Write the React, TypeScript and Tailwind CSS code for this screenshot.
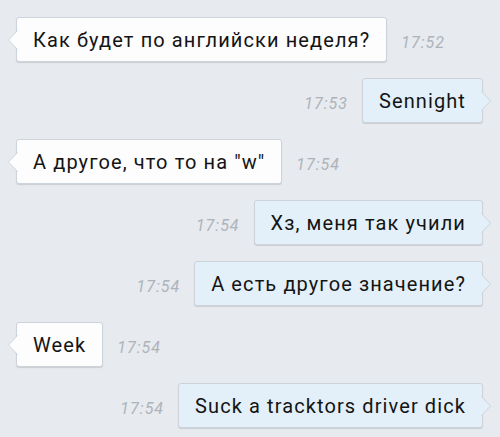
const MESSAGES = [
  { id: 1, text: "Как будет по английски неделя?", time: "17:52", out: false },
  { id: 2, text: "Sennight", time: "17:53", out: true },
  { id: 3, text: "А другое, что то на \"w\"", time: "17:54", out: false },
  { id: 4, text: "Хз, меня так учили", time: "17:54", out: true },
  { id: 5, text: "А есть другое значение?", time: "17:54", out: true },
  { id: 6, text: "Week", time: "17:54", out: false },
  { id: 7, text: "Suck a tracktors driver dick", time: "17:54", out: true },
];

function Tail({ out }: { out: boolean }) {
  const fill = out ? "#e3f0fa" : "#fdfdfd";
  return (
    <svg
      width="11"
      height="20"
      viewBox="0 0 11 20"
      className={
        out
          ? "absolute -right-[10px] top-1/2 -translate-y-1/2"
          : "absolute -left-[10px] top-1/2 -translate-y-1/2"
      }
    >
      {out ? (
        <>
          <path d="M0 0 L10 10 L0 20 Z" fill={fill} />
          <path d="M0.5 0.5 L9.5 10 L0.5 19.5" fill="none" stroke="#cdd3da" strokeWidth="1" />
        </>
      ) : (
        <>
          <path d="M11 0 L1 10 L11 20 Z" fill={fill} />
          <path d="M10.5 0.5 L1.5 10 L10.5 19.5" fill="none" stroke="#cdd3da" strokeWidth="1" />
        </>
      )}
    </svg>
  );
}

function Time({ value }: { value: string }) {
  return (
    <span className="pt-[7px] text-[16px] tracking-[1px] italic text-[#aeb3ba] font-['Roboto',sans-serif]">
      {value}
    </span>
  );
}

export default function App() {
  return (
    <div className="w-[500px] h-[437px] bg-[#e7eaee] pt-[17px] flex flex-col gap-[16px] overflow-hidden font-['Roboto',sans-serif]">
      {MESSAGES.map((m) => (
        <div
          key={m.id}
          className={`flex items-center gap-[14px] ${
            m.out ? "justify-end pr-[17px]" : "justify-start pl-4"
          }`}
        >
          {m.out && <Time value={m.time} />}
          <div
            className={`relative h-[45px] flex items-center px-4 rounded-[3px] border border-[#cdd3da] shadow-[0_1px_1px_rgba(0,0,0,0.12)] text-[20px] tracking-[1.1px] text-[#141414] ${
              m.out ? "bg-[#e3f0fa]" : "bg-[#fdfdfd]"
            }`}
          >
            {m.text}
            <Tail out={m.out} />
          </div>
          {!m.out && <Time value={m.time} />}
        </div>
      ))}
    </div>
  );
}
